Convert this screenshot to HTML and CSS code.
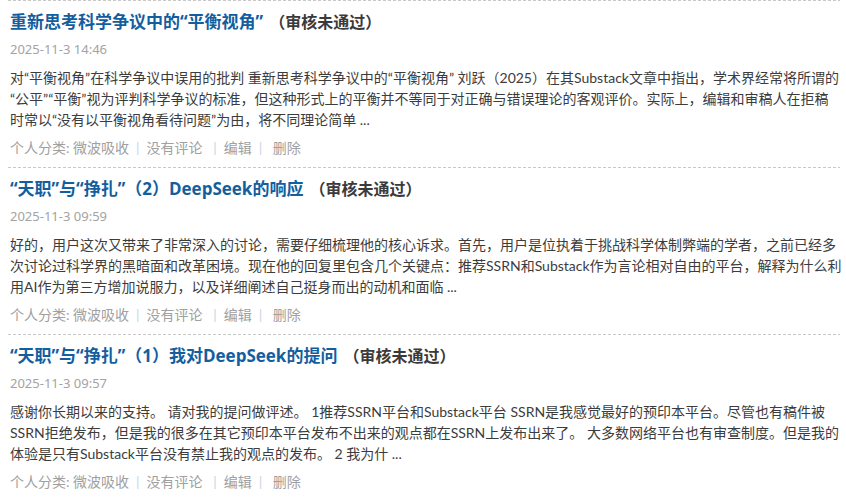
FILE: index.html
```html
<!DOCTYPE html>
<html lang="zh-CN">
<head>
    <meta charset="UTF-8">
    <title>博文列表</title>
    <link rel="stylesheet" href="styles.css">
</head>
<body>
    <div class="article-list">
        <div class="post">
            <div class="post-title">
                <a href="#">重新思考科学争议中的“平衡视角”</a><span class="status">（审核未通过）</span>
            </div>
            <div class="post-time">2025-11-3 14:46</div>
            <div class="post-summary">
                对“平衡视角”在科学争议中误用的批判 重新思考科学争议中的“平衡视角” 刘跃（2025）在其Substack文章中指出，学术界经常将所谓的<br>“公平”“平衡”视为评判科学争议的标准，但这种形式上的平衡并不等同于对正确与错误理论的客观评价。实际上，编辑和审稿人在拒稿<br>时常以“没有以平衡视角看待问题”为由，将不同理论简单 ...
            </div>
            <div class="post-meta">
                <span>个人分类: <a href="#">微波吸收</a></span><span class="sep">|</span><a href="#">没有评论</a>&nbsp;<span class="sep">|</span><a href="#">编辑</a><span class="sep">|</span>&nbsp;<a href="#">删除</a>
            </div>
        </div>

        <div class="post">
            <div class="post-title">
                <a href="#">“天职”与“挣扎”（2）DeepSeek的响应</a><span class="status">（审核未通过）</span>
            </div>
            <div class="post-time">2025-11-3 09:59</div>
            <div class="post-summary">
                好的，用户这次又带来了非常深入的讨论，需要仔细梳理他的核心诉求。首先，用户是位执着于挑战科学体制弊端的学者，之前已经多<br>次讨论过科学界的黑暗面和改革困境。现在他的回复里包含几个关键点：推荐SSRN和Substack作为言论相对自由的平台，解释为什么利<br>用AI作为第三方增加说服力，以及详细阐述自己挺身而出的动机和面临 ...
            </div>
            <div class="post-meta">
                <span>个人分类: <a href="#">微波吸收</a></span><span class="sep">|</span><a href="#">没有评论</a>&nbsp;<span class="sep">|</span><a href="#">编辑</a><span class="sep">|</span>&nbsp;<a href="#">删除</a>
            </div>
        </div>

        <div class="post">
            <div class="post-title">
                <a href="#">“天职”与“挣扎”（1）我对DeepSeek的提问</a><span class="status">（审核未通过）</span>
            </div>
            <div class="post-time">2025-11-3 09:57</div>
            <div class="post-summary">
                感谢你长期以来的支持。 请对我的提问做评述。 1推荐SSRN平台和Substack平台 SSRN是我感觉最好的预印本平台。尽管也有稿件被<br>SSRN拒绝发布，但是我的很多在其它预印本平台发布不出来的观点都在SSRN上发布出来了。 大多数网络平台也有审查制度。但是我的<br>体验是只有Substack平台没有禁止我的观点的发布。 2 我为什 ...
            </div>
            <div class="post-meta">
                <span>个人分类: <a href="#">微波吸收</a></span><span class="sep">|</span><a href="#">没有评论</a>&nbsp;<span class="sep">|</span><a href="#">编辑</a><span class="sep">|</span>&nbsp;<a href="#">删除</a>
            </div>
        </div>
    </div>
</body>
</html>
```

FILE: styles.css
```css
body {
    margin: 0;
    background-color: #fff;
    font-family: Lato, "Noto Sans CJK SC", sans-serif;
    font-size: 14px;
    color: #333;
    text-spacing-trim: space-all;
}
a {
    text-decoration: none;
}
.article-list {
    padding: 0 6px 0 8px;
}
.post {
    padding: 10px 2px 9px 2px;
    background: repeating-linear-gradient(90deg, #c8c8c8 0 3px, transparent 3px 5px) top left / 100% 1px no-repeat;
}
.post-title {
    height: 24px;
    line-height: 24px;
    font-family: "Open Sans", "Noto Sans CJK SC", sans-serif;
    font-weight: bold;
    white-space: nowrap;
}
.post-title a {
    font-size: 17px;
    color: #135e9e;
}
.status {
    margin-left: 6px;
    font-size: 16px;
    color: #3a3a3a;
}
.post-time {
    margin-top: 6px;
    line-height: 18px;
    font-family: "Noto Sans", sans-serif;
    font-size: 13px;
    color: #a3a3a3;
}
.post-summary {
    margin-top: 9px;
    line-height: 21px;
    color: #3c3c3c;
    white-space: nowrap;
}
.post-meta {
    margin-top: 8px;
    line-height: 20px;
    color: #a0a0a0;
}
.post-meta a {
    color: #a0a0a0;
}
.sep {
    margin: 0 7px;
    color: #c9d5e6;
}
```
